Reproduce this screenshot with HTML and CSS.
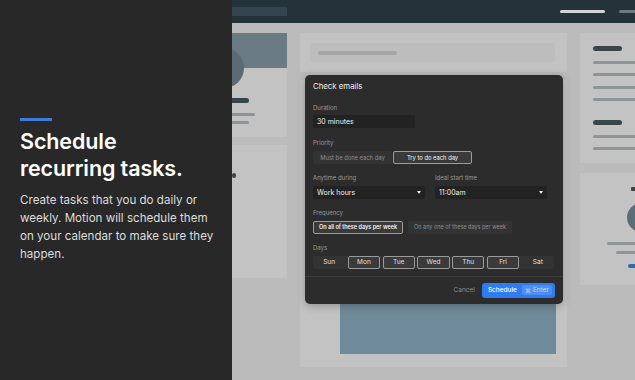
FILE: index.html
```html
<!DOCTYPE html>
<html lang="en">

<head>
    <meta charset="UTF-8">
    <meta name="viewport" content="width=device-width, initial-scale=1.0">
    <title>Schedule recurring tasks</title>
    <link rel="stylesheet" href="styles.css">
</head>

<body>
    <div class="page">
        <section class="intro">
            <div class="intro-bar"></div>
            <h1 class="intro-title">Schedule<br>recurring tasks.</h1>
            <p class="intro-text">Create tasks that you do daily or weekly. Motion will schedule them on your calendar to make sure they happen.</p>
        </section>

        <section class="app">
            <header class="nav">
                <div class="nav-logo"></div>
                <div class="nav-fill"></div>
                <div class="nav-link"></div>
                <div class="nav-link dim"></div>
            </header>

            <div class="board">
                <div class="col col-left">
                    <div class="card profile">
                        <div class="cover"></div>
                        <div class="avatar"></div>
                        <div class="bar dark w17"></div>
                        <div class="bar line w23"></div>
                        <div class="bar line w17 tight"></div>
                    </div>
                    <div class="card tall">
                        <div class="bar dark w4 mark"></div>
                    </div>
                </div>

                <div class="col col-mid">
                    <div class="card search-card">
                        <div class="search">
                            <span class="search-line"></span>
                        </div>
                    </div>
                    <div class="card media-card">
                        <div class="media"></div>
                    </div>
                </div>

                <div class="col col-right">
                    <div class="card list-card">
                        <div class="bar dark w29"></div>
                        <div class="bar line w60"></div>
                        <div class="bar line w60"></div>
                        <div class="bar line w60"></div>
                        <div class="bar line w60"></div>
                        <div class="bar dark w29 gap"></div>
                        <div class="bar line w60"></div>
                        <div class="bar line w60"></div>
                    </div>
                    <div class="card user-card">
                        <div class="bar dark w20"></div>
                        <div class="user-avatar"></div>
                        <div class="bar line w68"></div>
                        <div class="bar line w50 tight"></div>
                        <div class="bar blue w27"></div>
                    </div>
                </div>
            </div>

            <!-- dialog over the dimmed app -->
            <div class="modal">
                <div class="modal-body">
                    <div class="modal-title">Check emails</div>

                    <div class="field">
                        <div class="label">Duration</div>
                        <div class="input">30 minutes</div>
                    </div>

                    <div class="field">
                        <div class="label">Priority</div>
                        <div class="seg seg-priority">
                            <div class="seg-item">Must be done each day</div>
                            <div class="seg-item active">Try to do each day</div>
                        </div>
                    </div>

                    <div class="field field-pair">
                        <div>
                            <div class="label">Anytime during</div>
                            <div class="input select">Work hours
                                <svg width="4" height="3" viewBox="0 0 4 3"><path d="M0 0h4L2 3z" fill="#e6e6e6"/></svg>
                            </div>
                        </div>
                        <div>
                            <div class="label">Ideal start time</div>
                            <div class="input select">11:00am
                                <svg width="4" height="3" viewBox="0 0 4 3"><path d="M0 0h4L2 3z" fill="#e6e6e6"/></svg>
                            </div>
                        </div>
                    </div>

                    <div class="field">
                        <div class="label">Frequency</div>
                        <div class="seg seg-freq">
                            <div class="seg-item active">On all of these days per week</div>
                            <div class="seg-item">On any one of these days per week</div>
                        </div>
                    </div>

                    <div class="field last">
                        <div class="label">Days</div>
                        <div class="days">
                            <div class="day">Sun</div>
                            <div class="day active">Mon</div>
                            <div class="day active">Tue</div>
                            <div class="day active">Wed</div>
                            <div class="day active">Thu</div>
                            <div class="day active">Fri</div>
                            <div class="day">Sat</div>
                        </div>
                    </div>
                </div>

                <div class="modal-foot">
                    <span class="cancel">Cancel</span>
                    <button class="btn-primary">Schedule <span class="kbd"><span class="kbd-key">⌘</span> Enter</span></button>
                </div>
            </div>
        </section>
    </div>
</body>

</html>
```

FILE: styles.css
```css
html,
body {
    margin: 0;
    width: 100%;
    height: 100%;
}

body {
    font-family: Inter, "Liberation Sans", sans-serif;
    overflow: hidden;
}

.page {
    display: flex;
    width: 635px;
    height: 380px;
}

/* left text panel */
.intro {
    width: 232px;
    flex-shrink: 0;
    box-sizing: border-box;
    padding: 118px 12px 0 20px;
    background: #282828;
    color: #fff;
}

.intro-bar {
    width: 32px;
    height: 3px;
    background: #3a7bdc;
}

.intro-title {
    margin: 7px 0 0;
    font-size: 21.5px;
    line-height: 27px;
    font-weight: 600;
    letter-spacing: -0.1px;
}

.intro-text {
    margin: 8.5px 0 0;
    width: 200px;
    font-size: 11.6px;
    line-height: 18px;
    color: #dcdcdc;
}

/* dimmed app behind the dialog */
.app {
    position: relative;
    flex: 1;
    display: flex;
    flex-direction: column;
    background: #bbbbbb;
    overflow: hidden;
}

.nav {
    height: 23px;
    flex-shrink: 0;
    display: flex;
    align-items: center;
    background: #24323a;
}

.nav-logo {
    width: 55px;
    height: 9px;
    background: #35454e;
}

.nav-fill {
    flex: 1;
}

.nav-link {
    width: 45px;
    height: 3px;
    border-radius: 2px;
    background: #d2d4d5;
    margin-right: 14px;
}

.nav-link.dim {
    width: 30px;
    background: #6d7a80;
    margin-right: -14px;
}

.board {
    display: flex;
    gap: 13px;
    padding-top: 10px;
}

.col {
    display: flex;
    flex-direction: column;
    flex-shrink: 0;
}

.col-left {
    width: 55px;
    gap: 8px;
}

.col-mid {
    width: 267px;
    gap: 8px;
}

.col-right {
    width: 122px;
    gap: 10px;
}

.card {
    position: relative;
    box-sizing: border-box;
    background: #c3c3c3;
    border-radius: 2px;
}

.bar {
    height: 3px;
    border-radius: 2px;
    flex-shrink: 0;
}

.bar.dark {
    height: 5px;
    border-radius: 3px;
    background: #3a454a;
}

.bar.line {
    background: #8f9497;
}

.bar.blue {
    height: 4px;
    background: #2c6dab;
}

.w4 { width: 4px; }
.w17 { width: 17px; }
.w20 { width: 20px; }
.w23 { width: 23px; }
.w27 { width: 27px; }
.w29 { width: 29px; }
.w50 { width: 50px; }
.w60 { width: 60px; }
.w68 { width: 68px; }

/* left column */
.profile {
    height: 104px;
    display: flex;
    flex-direction: column;
}

.cover {
    height: 35px;
    background: #6a7b83;
}

.avatar {
    position: absolute;
    left: -28px;
    top: 15px;
    width: 40px;
    height: 40px;
    border-radius: 50%;
    background: #5b6b73;
}

.profile .bar.dark {
    margin-top: 30px;
    border-radius: 0 3px 3px 0;
}

.profile .bar.line {
    margin-top: 10px;
    border-radius: 0 2px 2px 0;
}

.profile .bar.line.tight {
    margin-top: 5px;
}

.tall {
    height: 133px;
    padding-top: 28px;
}

.mark {
    height: 3px;
}

/* middle column */
.search-card {
    height: 39px;
    padding: 10px 12px 0 10px;
}

.search {
    height: 19px;
    display: flex;
    align-items: center;
    padding-left: 8px;
    background: #bdbdbd;
    border-radius: 2px;
}

.search-line {
    width: 79px;
    height: 4px;
    border-radius: 2px;
    background: #a6a6a6;
}

.media-card {
    height: 287px;
    display: flex;
    flex-direction: column;
    justify-content: flex-end;
    padding: 0 11px 13px 40px;
}

.media {
    height: 160px;
    background: #6f8a99;
}

/* right column */
.list-card {
    height: 130px;
    padding: 13px 0 0 13px;
    display: flex;
    flex-direction: column;
    gap: 9.5px;
}

.list-card .bar.gap {
    margin-top: 9.5px;
}

.user-card {
    height: 112px;
    padding-top: 14px;
    display: flex;
    flex-direction: column;
    align-items: center;
}

.user-card .bar.dark {
    height: 4px;
    border-radius: 1px;
}

.user-avatar {
    width: 29px;
    height: 29px;
    border-radius: 50%;
    background: #5d6d76;
    margin: 12px 0 10px;
}

.user-card .bar.tight {
    margin-top: 6px;
}

.user-card .bar.blue {
    margin-top: 10px;
}

/* dialog */
.modal {
    position: absolute;
    left: 73px;
    top: 75px;
    width: 258px;
    height: 229px;
    display: flex;
    flex-direction: column;
    background: #2c2c2c;
    border-radius: 5px;
    box-shadow: 0 2px 8px rgba(0, 0, 0, 0.25);
    color: #f0f0f0;
}

.modal-body {
    flex: 1;
    padding: 6px 9px 0 8px;
}

.modal-title {
    font-size: 7.8px;
    line-height: 11px;
    margin-bottom: 11.8px;
}

.field {
    margin-bottom: 10.4px;
}

.field.last {
    margin-bottom: 0;
}

.field-pair {
    display: grid;
    grid-template-columns: 112px 112px;
    gap: 10px;
}

.label {
    font-size: 6px;
    line-height: 8px;
    color: #9a9a9a;
    margin-bottom: 3.7px;
}

.input {
    box-sizing: border-box;
    width: 102px;
    height: 13px;
    padding: 0 4px;
    background: #222222;
    border-radius: 2px;
    font-size: 7px;
    line-height: 13px;
}

.select {
    width: 112px;
    display: flex;
    align-items: center;
    justify-content: space-between;
    padding-right: 4px;
}

.seg {
    display: flex;
    height: 13px;
}

.seg-item {
    box-sizing: border-box;
    height: 13px;
    display: flex;
    align-items: center;
    justify-content: center;
    background: #333333;
    border: 1px solid transparent;
    border-radius: 2px;
    font-size: 5.8px;
    color: #8e8e8e;
}

.seg-item.active {
    background: #3a3a3a;
    border-color: #9c9c9c;
    color: #f4f4f4;
}

.seg-priority {
    gap: 1px;
}

.seg-priority .seg-item {
    width: 79px;
}

.seg-freq {
    gap: 5px;
}

.seg-freq .seg-item {
    padding: 0 5px;
    font-size: 5.5px;
}

.seg-freq .seg-item.active {
    font-weight: 600;
}

.days {
    display: grid;
    grid-template-columns: repeat(7, 1fr);
    gap: 2.5px;
    width: 241px;
    height: 13px;
    background: #333333;
    border-radius: 2px;
}

.day {
    box-sizing: border-box;
    display: flex;
    align-items: center;
    justify-content: center;
    border: 1px solid transparent;
    border-radius: 2px;
    font-size: 6.5px;
    color: #e0e0e0;
}

.day.active {
    background: #3a3a3a;
    border-color: #9a9a9a;
}

.modal-foot {
    height: 26px;
    display: flex;
    align-items: center;
    justify-content: flex-end;
    gap: 7px;
    padding: 0 8px 0 0;
    border-top: 1px solid #3a3a3a;
    margin-bottom: 1px;
}

.cancel {
    font-size: 6.5px;
    color: #8c8c8c;
}

.btn-primary {
    height: 15px;
    display: flex;
    align-items: center;
    gap: 5px;
    padding: 0 3px 0 6px;
    border: none;
    border-radius: 3px;
    background: #2f7cf0;
    color: #fff;
    font-family: inherit;
    font-size: 6.5px;
    font-weight: 500;
}

.kbd {
    display: flex;
    align-items: center;
    gap: 2px;
    padding: 1px 3px;
    border-radius: 2px;
    background: rgba(255, 255, 255, 0.14);
    color: #c9dcfb;
    font-weight: 400;
}

.kbd-key {
    font-family: "DejaVu Sans", sans-serif;
    font-size: 6px;
}
```
